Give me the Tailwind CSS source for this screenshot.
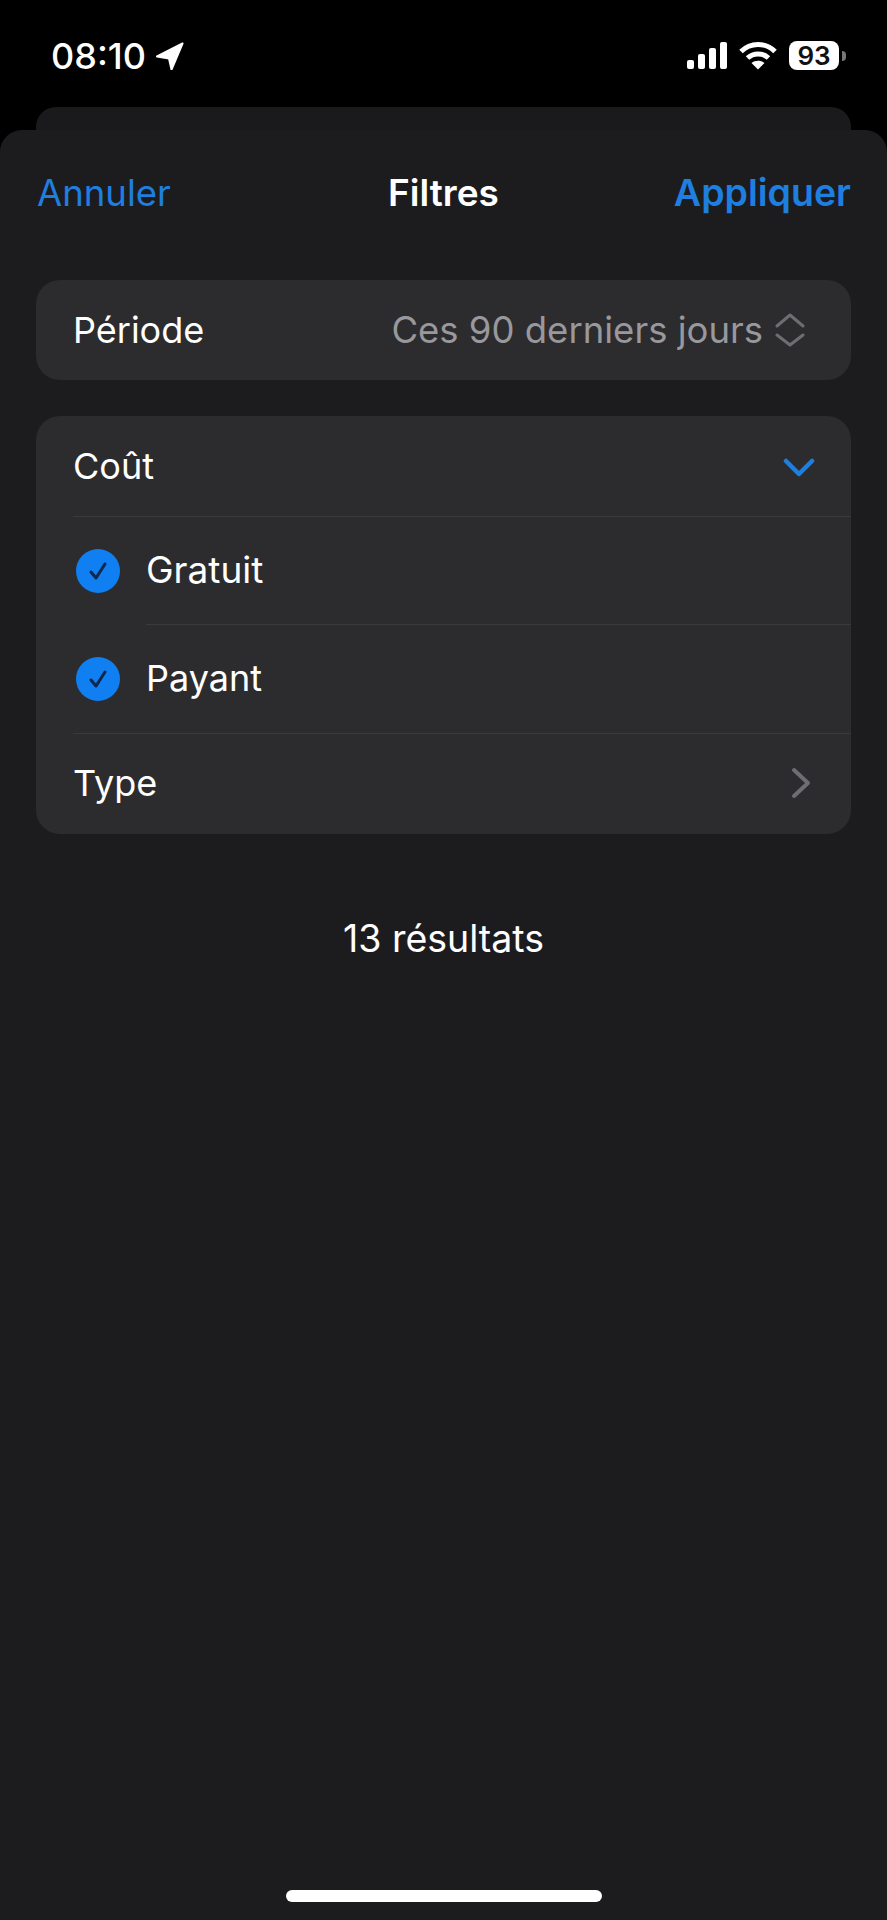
<!DOCTYPE html>
<html lang="fr">
  <head>
    <meta charset="UTF-8" />
    <meta name="viewport" content="width=device-width, initial-scale=1.0" />
    <title>Filtres</title>
    <script src="https://cdn.jsdelivr.net/npm/@tailwindcss/browser@4"></script>
  </head>

  <body class="bg-black font-['Inter',sans-serif] text-white">
    <div class="flex h-[1920px] w-[887px] flex-col overflow-hidden">
      <!-- Status bar -->
      <div class="flex h-[107px] items-start justify-between pl-[51px] pr-[41px] pt-[36px]">
        <div class="flex items-center gap-[10px]">
          <span class="text-[36px] leading-[40px] font-medium">08:10</span>
          <svg width="28" height="28" viewBox="0 0 28 28" fill="#fff">
            <path d="M26.5 1.5 1 14.5 13 16.5 15.5 27.5Z" stroke="#fff" stroke-width="2" stroke-linejoin="round" />
          </svg>
        </div>
        <div class="flex items-center gap-[12px] pt-[5px]">
          <svg width="40" height="27" viewBox="0 0 40 27" fill="#fff">
            <rect x="0" y="18" width="7" height="9" rx="2" />
            <rect x="11" y="12" width="7" height="15" rx="2" />
            <rect x="22" y="6" width="7" height="21" rx="2" />
            <rect x="33" y="0" width="7" height="27" rx="2" />
          </svg>
          <svg width="38" height="29" viewBox="0 0 38 29" fill="none" stroke="#fff" stroke-width="5">
            <path d="M2 10.5C11.5 1 26.5 1 36 10.5" />
            <path d="M8.5 17C14.5 11.5 23.5 11.5 29.5 17" />
            <path d="M19 28.5 12.5 22C16 19 22 19 25.5 22Z" fill="#fff" stroke="none" />
          </svg>
          <div class="flex items-center gap-[3px]">
            <div class="flex h-[29px] w-[50px] items-center justify-center rounded-[8px] bg-white text-[26px] leading-none font-semibold text-[#111]">93</div>
            <div class="h-[10px] w-[4px] rounded-r-full bg-[#777]"></div>
          </div>
        </div>
      </div>

      <!-- Sheet stack -->
      <div class="relative flex-1">
        <div class="mx-[36px] h-[40px] rounded-t-[20px] bg-[#1a1a1c]"></div>
        <div class="absolute inset-x-0 top-[23px] bottom-0 flex flex-col rounded-t-[22px] bg-[#1c1c1e] px-[36px]">
          <!-- Nav -->
          <div class="relative mt-[40px] flex h-[46px] items-center justify-between text-[36.5px] leading-[46px] text-[#1f7fe0]">
            <span class="ml-px">Annuler</span>
            <span class="absolute inset-x-0 text-center text-[37px] font-semibold text-white">Filtres</span>
            <span class="relative text-[37.5px] font-semibold">Appliquer</span>
          </div>

          <!-- Période -->
          <div class="mt-[64px] flex h-[100px] items-center justify-between rounded-[24px] bg-[#2c2c2e] pl-[37px] pr-[46px] text-[36px]">
            <span>Période</span>
            <div class="flex items-center gap-[12px] text-[#98989d]">
              <span class="text-[36.5px]">Ces 90 derniers jours</span>
              <svg width="30" height="34" viewBox="0 0 30 34" fill="none" stroke="#6d6d72" stroke-width="3" stroke-linecap="round" stroke-linejoin="round">
                <path d="M2 13 15 2 28 13" />
                <path d="M2 22 15 32 28 22" />
              </svg>
            </div>
          </div>

          <!-- Coût / Type -->
          <div class="mt-[36px] rounded-[24px] bg-[#2c2c2e] text-[36px]">
            <div class="ml-[37px] flex h-[101px] items-center justify-between border-b border-[#3a3a3c] pr-[36px]">
              <span>Coût</span>
              <svg class="mt-[3px]" width="32" height="20" viewBox="0 0 32 20" fill="none" stroke="#1f7fe0" stroke-width="4.5" stroke-linecap="round" stroke-linejoin="round">
                <path d="M3 3 16 16 29 3" />
              </svg>
            </div>

            <div class="flex h-[108px] items-center pl-[40px]">
              <div class="flex h-[44px] w-[44px] shrink-0 items-center justify-center rounded-full bg-[#0f7ff2]">
                <svg width="24" height="22" viewBox="0 0 24 22" fill="none" stroke="#10264a" stroke-width="3" stroke-linecap="round" stroke-linejoin="round">
                  <path d="M5 12 10 18 19 4" />
                </svg>
              </div>
              <div class="ml-[26px] flex h-full flex-1 items-center border-b border-[#3a3a3c] pb-[2px] text-[37px]">Gratuit</div>
            </div>

            <div class="flex h-[108px] items-center pl-[40px]">
              <div class="flex h-[44px] w-[44px] shrink-0 items-center justify-center rounded-full bg-[#0f7ff2]">
                <svg width="24" height="22" viewBox="0 0 24 22" fill="none" stroke="#10264a" stroke-width="3" stroke-linecap="round" stroke-linejoin="round">
                  <path d="M5 12 10 18 19 4" />
                </svg>
              </div>
              <div class="ml-[26px] flex-1 pb-[2px]">Payant</div>
            </div>

            <div class="ml-[37px] flex h-[101px] items-center justify-between border-t border-[#3a3a3c] pb-[3px] pr-[40px]">
              <span>Type</span>
              <svg width="20" height="32" viewBox="0 0 20 32" fill="none" stroke="#6d6d72" stroke-width="4" stroke-linecap="round" stroke-linejoin="round">
                <path d="M3 3 17 16 3 29" />
              </svg>
            </div>
          </div>

          <!-- Results -->
          <p class="mt-[83px] text-center text-[37.5px] leading-[44px]">13 résultats</p>

          <!-- Home indicator -->
          <div class="absolute bottom-[18px] left-[286px] h-[12px] w-[316px] rounded-full bg-white"></div>
        </div>
      </div>
    </div>
  </body>
</html>
